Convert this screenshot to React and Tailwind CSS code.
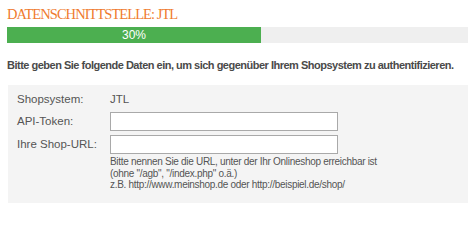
import React from "react";

const sans = "font-['Liberation_Sans',Arial,sans-serif]";

export default function App() {
  const progress = 30;

  return (
    <div className="w-[468px] h-[203px] overflow-hidden bg-white text-[#555]">
      <div className="w-[480px] pl-[7px]">
        <h1 className="pt-[4px] h-[27px] leading-[20px] text-[14.5px] text-[#ef7b2f] font-['Liberation_Serif',serif] tracking-[-0.95px] whitespace-nowrap">
          DATENSCHNITTSTELLE: JTL
        </h1>

        <div className="h-[16px] bg-[#efefef] flex">
          <div
            className={`h-full w-[254px] bg-[#4caf50] text-white text-[12px] leading-[16px] text-center ${sans}`}
          >
            {progress}%
          </div>
        </div>

        <p className={`mt-[14px] h-[16px] leading-[16px] text-[11px] font-bold tracking-[-0.5px] text-[#4a4a4a] whitespace-nowrap ${sans}`}>
          Bitte geben Sie folgende Daten ein, um sich gegenüber Ihrem Shopsystem zu authentifizieren.
        </p>

        <div className={`mt-[12px] ml-[1px] bg-[#f4f4f4] pt-[5px] pl-[9px] h-[120px] text-[11.5px] ${sans}`}>
          <div className="grid grid-cols-[93px_228px] gap-y-[3px] items-center">
            <span className="h-[19px] leading-[19px]">Shopsystem:</span>
            <span className="h-[19px] leading-[19px]">JTL</span>

            <span className="leading-[19px]">API-Token:</span>
            <input className="h-[19px] w-[228px] border border-[#a9a9a9] bg-white outline-none" />

            <span className="mt-[1px] leading-[19px]">Ihre Shop-URL:</span>
            <input className="mt-[1px] h-[19px] w-[228px] border border-[#a9a9a9] bg-white outline-none" />

            <div />
            <p className="mt-[-1px] text-[10px] leading-[11.5px] tracking-[-0.3px] whitespace-nowrap">
              Bitte nennen Sie die URL, unter der Ihr Onlineshop erreichbar ist
              <br />
              (ohne "/agb", "/index.php" o.ä.)
              <br />
              z.B. http://www.meinshop.de oder http://beispiel.de/shop/
            </p>
          </div>
        </div>
      </div>
    </div>
  );
}
